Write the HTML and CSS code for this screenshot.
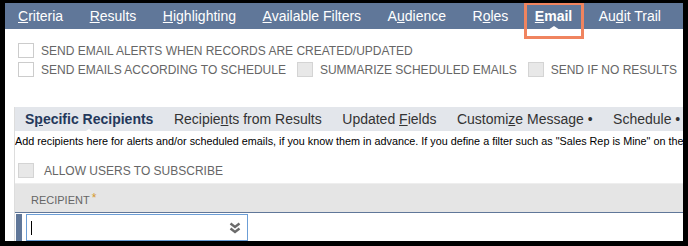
FILE: index.html
```html
<!DOCTYPE html>
<html lang="en">
<head>
    <meta charset="UTF-8">
    <meta name="viewport" content="width=device-width, initial-scale=1.0">
    <title>Saved Search - Email</title>
    <link rel="stylesheet" href="styles.css">
</head>
<body>

<div class="frame">
    <div class="tabs">
        <span class="tab"><u>C</u>riteria</span>
        <span class="tab"><u>R</u>esults</span>
        <span class="tab"><u>H</u>ighlighting</span>
        <span class="tab"><u>A</u>vailable Filters</span>
        <span class="tab">A<u>u</u>dience</span>
        <span class="tab">R<u>o</u>les</span>
        <span class="tab active"><u>E</u>mail</span>
        <span class="tab">Au<u>d</u>it Trail</span>
    </div>

    <div class="options">
        <div class="opt-row">
            <span class="box"></span><span class="opt-label">SEND EMAIL ALERTS WHEN RECORDS ARE CREATED/UPDATED</span>
        </div>
        <div class="opt-row">
            <span class="box"></span><span class="opt-label">SEND EMAILS ACCORDING TO SCHEDULE</span>
            <span class="box disabled"></span><span class="opt-label">SUMMARIZE SCHEDULED EMAILS</span>
            <span class="box disabled"></span><span class="opt-label">SEND IF NO RESULTS</span>
        </div>
    </div>

    <div class="panel">
        <div class="subtabs">
            <span class="subtab current">S<u>p</u>ecific Recipients</span>
            <span class="subtab">Recipie<u>n</u>ts from Results</span>
            <span class="subtab">Updated <u>F</u>ields</span>
            <span class="subtab">Customi<u>z</u>e Message &bull;</span>
            <span class="subtab">Schedule &bull;</span>
        </div>
        <div class="help">Add recipients here for alerts and/or scheduled emails, if you know them in advance. If you define a filter such as "Sales Rep is Mine" on the</div>

        <div class="opt-row subscribe">
            <span class="box disabled"></span><span class="opt-label">ALLOW USERS TO SUBSCRIBE</span>
        </div>

        <div class="grid-head">
            <span class="col-label">RECIPIENT<span class="req">*</span></span>
        </div>
        <div class="grid-row">
            <span class="row-marker"></span>
            <div class="select">
                <span class="caret"></span>
                <svg class="dd" width="12" height="12" viewBox="0 0 12 12">
                    <path d="M1.5 1.5 L6 5 L10.5 1.5" fill="none" stroke="#6b6b6b" stroke-width="2.4"/>
                    <path d="M1.5 6.5 L6 10 L10.5 6.5" fill="none" stroke="#6b6b6b" stroke-width="2.4"/>
                </svg>
            </div>
        </div>
    </div>
</div>

</body>
</html>
```

FILE: styles.css
```css
body {
    margin: 0;
    background-color: #000;
    font-family: "Liberation Sans", Arial, sans-serif;
}

.frame {
    position: relative;
    width: 678px;
    height: 238px;
    margin: 3px 0 0 5px;
    background-color: #fff;
    overflow: hidden;
}

/* top tab bar */
.tabs {
    display: flex;
    align-items: center;
    gap: 26.5px;
    height: 26px;
    padding-left: 13px;
    background-color: #607799;
    color: #fff;
    font-size: 14px;
}

.tab {
    position: relative;
    white-space: nowrap;
}

.tab.active {
    font-weight: bold;
}

.tab.active::before {
    content: "";
    position: absolute;
    left: -11px;
    right: -12px;
    top: -6px;
    height: 31px;
    border: 3px solid #f0845f;
}

.tab.active::after {
    content: "";
    position: absolute;
    left: 50%;
    bottom: -6px;
    margin-left: -6px;
    border-left: 6px solid transparent;
    border-right: 6px solid transparent;
    border-bottom: 4px solid #fff;
}

/* checkbox options */
.options {
    padding: 12px 0 0 13px;
}

.opt-row {
    display: flex;
    align-items: center;
    height: 19px;
    color: #666;
    font-size: 12px;
}

.box {
    flex-shrink: 0;
    width: 14px;
    height: 13px;
    border: 1px solid #ccc;
    background-color: #fff;
    margin-right: 7px;
}

.box.disabled {
    background-color: #e8e8e8;
    border-color: #d4d4d4;
}

.opt-label {
    margin-right: 11px;
    white-space: nowrap;
}

/* subtab panel */
.panel {
    margin: 28px 0 0 9px;
    border-left: 1px solid #ddd;
    height: 200px;
}

.subtabs {
    position: relative;
    display: flex;
    align-items: center;
    gap: 20.5px;
    height: 24px;
    padding-left: 10px;
    background-color: #e3e6eb;
    color: #333;
    font-size: 14px;
    white-space: nowrap;
}

.subtab.current {
    position: relative;
    font-weight: bold;
    color: #24385b;
}

.subtab.current::after {
    content: "";
    position: absolute;
    left: 50%;
    bottom: -6px;
    margin-left: -6px;
    border-left: 6px solid transparent;
    border-right: 6px solid transparent;
    border-bottom: 4px solid #fff;
}

.help {
    padding: 4px 0 0 0;
    font-size: 10.8px;
    color: #000;
    white-space: nowrap;
}

.subscribe {
    margin: 14px 0 0 3px;
}

.subscribe .box {
    margin-right: 10px;
}

.grid-head {
    display: flex;
    align-items: center;
    height: 28px;
    margin-top: 3px;
    padding-left: 16px;
    background-color: #e5e5e5;
    border-top: 1px solid #eee;
    border-bottom: 1px solid #607799;
}

.col-label {
    font-size: 11px;
    color: #666;
}

.req {
    color: #d59a2f;
    font-size: 12px;
    margin-left: 2px;
    vertical-align: 2px;
}

.grid-row {
    display: flex;
    align-items: flex-start;
    height: 30px;
    padding-top: 1px;
}

.row-marker {
    width: 6px;
    height: 30px;
    margin-left: 1px;
    background-color: #607799;
}

.select {
    position: relative;
    width: 220px;
    height: 25px;
    margin-left: 4px;
    border: 1px solid #6c9ed6;
    background-color: #fff;
}

.caret {
    position: absolute;
    left: 4px;
    top: 6px;
    width: 1px;
    height: 14px;
    background-color: #000;
}

.dd {
    position: absolute;
    right: 6px;
    top: 7px;
}
```
